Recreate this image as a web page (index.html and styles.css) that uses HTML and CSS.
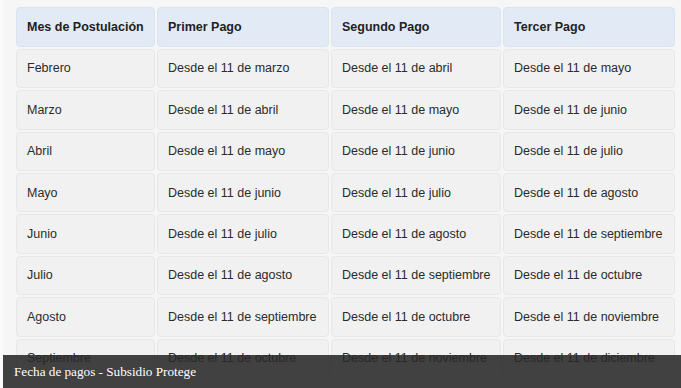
FILE: index.html
```html
<!DOCTYPE html>
<html lang="es">
<head>
<meta charset="utf-8">
<title>Fecha de pagos - Subsidio Protege</title>
<link rel="stylesheet" href="styles.css">
</head>
<body>
<figure class="figure">
  <div class="table">
    <div class="cell head">Mes de Postulación</div>
    <div class="cell head">Primer Pago</div>
    <div class="cell head">Segundo Pago</div>
    <div class="cell head">Tercer Pago</div>

    <div class="cell">Febrero</div>
    <div class="cell">Desde el 11 de marzo</div>
    <div class="cell">Desde el 11 de abril</div>
    <div class="cell">Desde el 11 de mayo</div>

    <div class="cell">Marzo</div>
    <div class="cell">Desde el 11 de abril</div>
    <div class="cell">Desde el 11 de mayo</div>
    <div class="cell">Desde el 11 de junio</div>

    <div class="cell">Abril</div>
    <div class="cell">Desde el 11 de mayo</div>
    <div class="cell">Desde el 11 de junio</div>
    <div class="cell">Desde el 11 de julio</div>

    <div class="cell">Mayo</div>
    <div class="cell">Desde el 11 de junio</div>
    <div class="cell">Desde el 11 de julio</div>
    <div class="cell">Desde el 11 de agosto</div>

    <div class="cell">Junio</div>
    <div class="cell">Desde el 11 de julio</div>
    <div class="cell">Desde el 11 de agosto</div>
    <div class="cell">Desde el 11 de septiembre</div>

    <div class="cell">Julio</div>
    <div class="cell">Desde el 11 de agosto</div>
    <div class="cell">Desde el 11 de septiembre</div>
    <div class="cell">Desde el 11 de octubre</div>

    <div class="cell">Agosto</div>
    <div class="cell">Desde el 11 de septiembre</div>
    <div class="cell">Desde el 11 de octubre</div>
    <div class="cell">Desde el 11 de noviembre</div>

    <div class="cell">Septiembre</div>
    <div class="cell">Desde el 11 de octubre</div>
    <div class="cell">Desde el 11 de noviembre</div>
    <div class="cell">Desde el 11 de diciembre</div>
  </div>
  <figcaption class="caption">Fecha de pagos - Subsidio Protege</figcaption>
</figure>
</body>
</html>
```
FILE: styles.css
```css
html, body {
  margin: 0;
  padding: 0;
  height: 100%;
  overflow: hidden;
  background: #fbfbfb;
}

.figure {
  position: relative;
  margin: 0 0 0 3px;
  height: 388px;
  overflow: hidden;
  background: #f6f6f6;
  padding: 7px 0 0 13px;
  box-sizing: border-box;
}

.table {
  display: grid;
  grid-template-columns: 139px 172px 170px 172px;
  grid-template-rows: 39.8px;
  grid-auto-rows: 39.4px;
  gap: 2px;
  font-family: "Liberation Sans", Arial, sans-serif;
  font-size: 12.5px;
  color: #2b2b2b;
}

.cell {
  display: flex;
  align-items: center;
  padding: 0 10px;
  background: #f1f1f1;
  border: 1px solid #e7e7e7;
  border-radius: 4px;
  white-space: nowrap;
}

.head {
  background: #e2ebf5;
  border-color: #dbe4ee;
  font-weight: bold;
  color: #222;
}

.caption {
  position: absolute;
  left: 0;
  right: 0;
  bottom: 0;
  height: 33px;
  margin: 0;
  padding: 0 0 0 11px;
  display: flex;
  align-items: center;
  background: rgba(40, 40, 40, 0.88);
  color: #fff;
  font-family: "Liberation Serif", "Times New Roman", serif;
  font-size: 13.2px;
}
```
